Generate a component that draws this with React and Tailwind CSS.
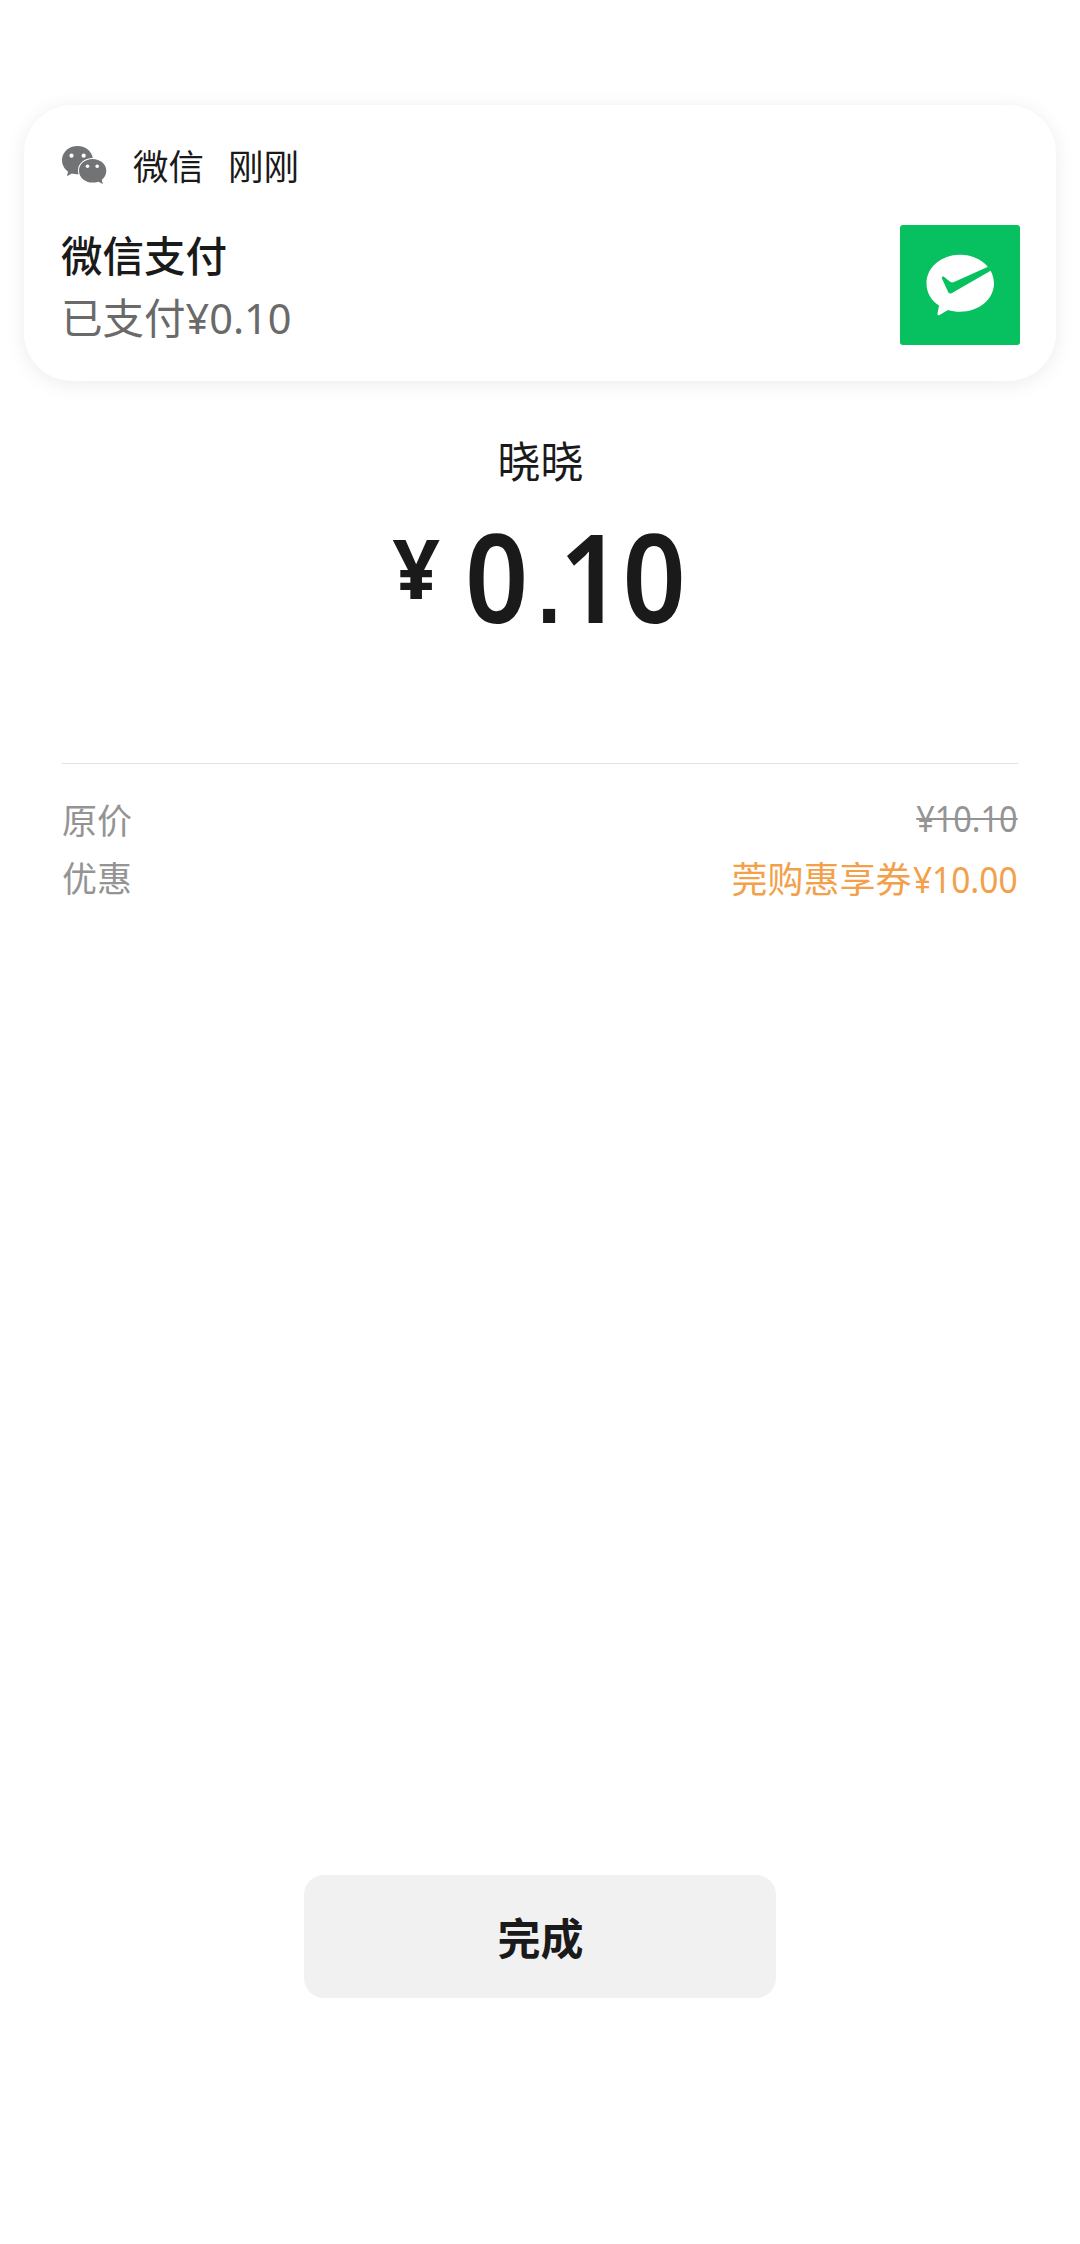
const WechatIcon = () => (
  <svg className="mt-[2px] h-[42px] w-[48px]" viewBox="60 144 48 42">
    <g fill="#717375">
      <path d="M77.5 146C86 146 93 152.200 93 160C93 168 86 174.300 77.500 174.300C75.500 174.300 73.500 174 71.800 173.500L67 176.200L68 171.600C64.300 169 62 164.800 62 160C62 152.200 69 146 77.500 146Z" />
      <path
        stroke="#fff"
        strokeWidth="2"
        paintOrder="stroke"
        d="M92.500 159C100 159 106.300 164 106.300 170.700C106.300 174.500 104.400 177.800 101.800 179.800L102.800 184L98.500 181.700C96.500 182.400 94.600 182.600 92.500 182.600C85 182.600 79 177.300 79 170.700C79 164 85 159 92.500 159Z"
      />
    </g>
    <g fill="#fff">
      <circle cx="71.500" cy="155.700" r="2.100" />
      <circle cx="83.700" cy="155.700" r="2.100" />
      <circle cx="87.500" cy="166.300" r="1.800" />
      <circle cx="97.200" cy="166.300" r="1.800" />
    </g>
  </svg>
);

const PayIcon = () => (
  <svg className="h-[120px] w-[120px] rounded-[3px] bg-[#07c160]" viewBox="0 0 120 120">
    <path
      fill="#fff"
      d="M60 29.800C79 29.800 94 42.300 94 58.300C94 74.300 79 86.800 60 86.800C55.500 86.800 51.500 86 48 85L39.500 90C38.300 90.700 37.300 90 37.500 88.700L39 80.500C31 75.500 26.500 67.500 26.500 58.300C26.500 42.300 41.500 29.800 60 29.800Z"
    />
    <path
      fill="#07c160"
      d="M42 53.500C41.300 51.600 42.800 51 44.200 52L49.800 56.500C51.300 57.700 52.600 57.700 54 57L88 41.800L91.500 45.200L52 67.900C50 69 48.900 68.500 48 66.800Z"
    />
  </svg>
);

// latin digits, slightly condensed
const Money = ({ children, className = "" }) => (
  <span className={`inline-block origin-right font-['Noto_Sans'] ${className}`}>
    {children}
  </span>
);

const Notification = () => (
  <section className="mx-6 flex h-[276px] flex-col rounded-[48px] bg-white px-9 pt-9 shadow-[0_3px_20px_rgba(0,0,0,0.08)]">
    <header className="flex h-[46px] items-center text-[35.5px] leading-[46px]">
      <WechatIcon />
      <span className="ml-[25px] mt-px">微信</span>
      <span className="ml-[24px] mt-px">刚刚</span>
    </header>
    <div className="mt-[38px] flex justify-between">
      <div className="-mt-[2px] pl-px text-[41.5px] leading-[62px]">
        <h1 className="font-medium">微信支付</h1>
        <p className="text-[#6a6a6a]">
          已支付<span className="font-['Noto_Sans']">¥0.10</span>
        </p>
      </div>
      <PayIcon />
    </div>
  </section>
);

const Payment = () => (
  <section className="mt-[50px] flex flex-col items-center">
    <h2 className="pl-px text-[43px] leading-[56px]">晓晓</h2>
    <div className="mt-[19px] flex h-[140px] items-start pl-[23px] font-['Noto_Sans'] font-semibold">
      <span className="mt-[16px] text-[83px] font-bold leading-[90px]">¥</span>
      <span className="ml-[25px] origin-left scale-x-90 text-[123px] leading-[140px]">
        0
        <span className="-mr-[2px] ml-[10px] font-['Liberation_Sans'] text-[95px] font-bold">.</span>
        10
      </span>
    </div>
  </section>
);

const Details = () => (
  <section className="mx-[62px] mt-[117px] border-t border-[#e2e2e2] pt-[26px] text-[35px] leading-[58px] text-[#949494]">
    <div className="flex h-[58px] justify-between">
      <span>原价</span>
      <Money className="scale-x-90 text-[36px] line-through decoration-2">¥10.10</Money>
    </div>
    <div className="flex h-[58px] justify-between">
      <span>优惠</span>
      <span className="text-[36px] text-[#f3a04a]">
        <span className="-mr-[6px]">莞购惠享券</span>
        <Money className="scale-x-[.93]">¥10.00</Money>
      </span>
    </div>
  </section>
);

export default function App() {
  return (
    <main className="flex h-[2244px] flex-col overflow-hidden bg-white pb-[246px] pt-[105px] font-['Noto_Sans_CJK_SC',sans-serif] text-[#1a1a1a]">
      <Notification />
      <Payment />
      <Details />
      <button className="mx-auto mt-auto h-[123px] w-[472px] rounded-[20px] bg-[#f1f1f1] pl-px text-[43px] font-bold">
        完成
      </button>
    </main>
  );
}
